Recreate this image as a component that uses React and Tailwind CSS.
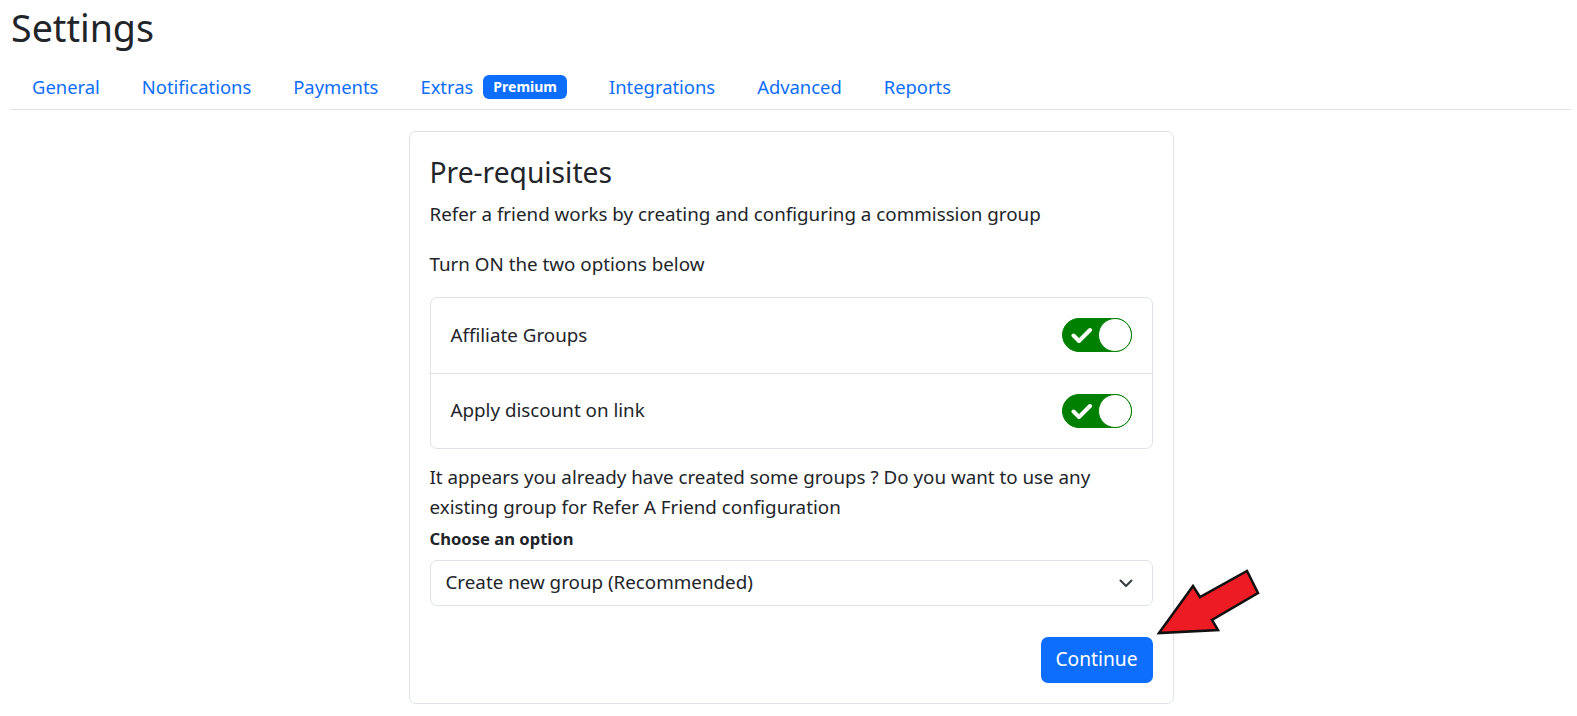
import { useState } from 'react'

const tabs = ['General', 'Notifications', 'Payments', 'Extras', 'Integrations', 'Advanced', 'Reports']

function Toggle({ on, onChange }) {
  return (
    <button
      type="button"
      onClick={onChange}
      className={`relative flex h-[34px] w-[70px] items-center rounded-full border ${on ? 'border-[#008000] bg-[#008000]' : 'border-[#adb5bd] bg-white'}`}
    >
      {on && (
        <svg className="absolute left-[8px] top-[8px] h-[17px] w-[22px]" viewBox="0 0 22 17" fill="none">
          <path d="M2.5 8.5l5.5 5.5L19 3" stroke="white" strokeWidth="4" strokeLinecap="round" strokeLinejoin="round" />
        </svg>
      )}
      <span className={`absolute top-[-1px] h-[34px] w-[34px] rounded-full border bg-white ${on ? 'right-[-1px] border-[#008000]' : 'left-[-1px] border-[#adb5bd]'}`} />
    </button>
  )
}

export default function App() {
  const [groups, setGroups] = useState(true)
  const [discount, setDiscount] = useState(true)

  return (
    <div className="relative min-h-screen bg-white pl-[11px] pr-[6px] pt-[5px] font-['Noto_Sans',sans-serif] text-[#212529]">
      <h1 className="text-[37.6px] leading-[46px] font-normal">Settings</h1>

      <nav className="mt-[10px] flex border-b border-[#dee2e6]">
        {tabs.map((t) => (
          <a key={t} href="#" className="flex h-[48px] items-center px-[21px] pt-[3px] text-[18.4px] text-[#0d6efd]">
            {t}
            {t === 'Extras' && (
              <span className="ml-[10px] rounded-[6px] bg-[#0d6efd] px-[10px] py-[3px] text-[14px] font-bold leading-[18px] text-white">
                Premium
              </span>
            )}
          </a>
        ))}
      </nav>

      <div className="mx-auto mt-[21px] w-[765px] rounded-[7px] border border-[#dee2e6] px-[20px] pb-[20px] pt-[23px] text-[18.8px] leading-[28.8px]">
        <h4 className="text-[28.2px] leading-[34px]">Pre-requisites</h4>
        <p className="mt-[11px]">Refer a friend works by creating and configuring a commission group</p>
        <p className="mt-[21px]">Turn ON the two options below</p>

        <div className="mt-[18px] rounded-[7px] border border-[#dee2e6]">
          <div className="flex h-[75px] items-center justify-between px-[20px]">
            <span>Affiliate Groups</span>
            <Toggle on={groups} onChange={() => setGroups(!groups)} />
          </div>
          <div className="flex h-[75px] items-center justify-between border-t border-[#dee2e6] px-[20px]">
            <span>Apply discount on link</span>
            <Toggle on={discount} onChange={() => setDiscount(!discount)} />
          </div>
        </div>

        <p className="mt-[13px] leading-[30px]">
          It appears you already have created some groups ? Do you want to use any existing group for Refer A Friend configuration
        </p>
        <label className="mt-[3px] block text-[16.6px] font-bold leading-[28px]">Choose an option</label>

        <div className="mt-[7px] flex h-[46px] items-center justify-between rounded-[7px] border border-[#dee2e6] pl-[15px] pr-[18px]">
          <span>Create new group (Recommended)</span>
          <svg className="h-[16px] w-[16px]" viewBox="0 0 16 16" fill="none">
            <path d="M2.5 5.5l5.5 5.5 5.5-5.5" stroke="#343a40" strokeWidth="2" strokeLinecap="round" strokeLinejoin="round" />
          </svg>
        </div>

        <div className="mt-[31px] flex justify-end">
          <button className="h-[46px] w-[112px] rounded-[7px] bg-[#0d6efd] text-[19.2px] text-white">Continue</button>
        </div>
      </div>

      {/* annotation arrow */}
      <svg className="absolute left-[1150px] top-[560px] h-[90px] w-[120px]" viewBox="1150 560 120 90">
        <polygon
          points="1159,633 1193,586 1200,597 1247,571 1258,593 1212,620 1218,630"
          fill="#ed1c24"
          stroke="#111"
          strokeWidth="2.5"
          strokeLinejoin="miter"
        />
      </svg>
    </div>
  )
}
